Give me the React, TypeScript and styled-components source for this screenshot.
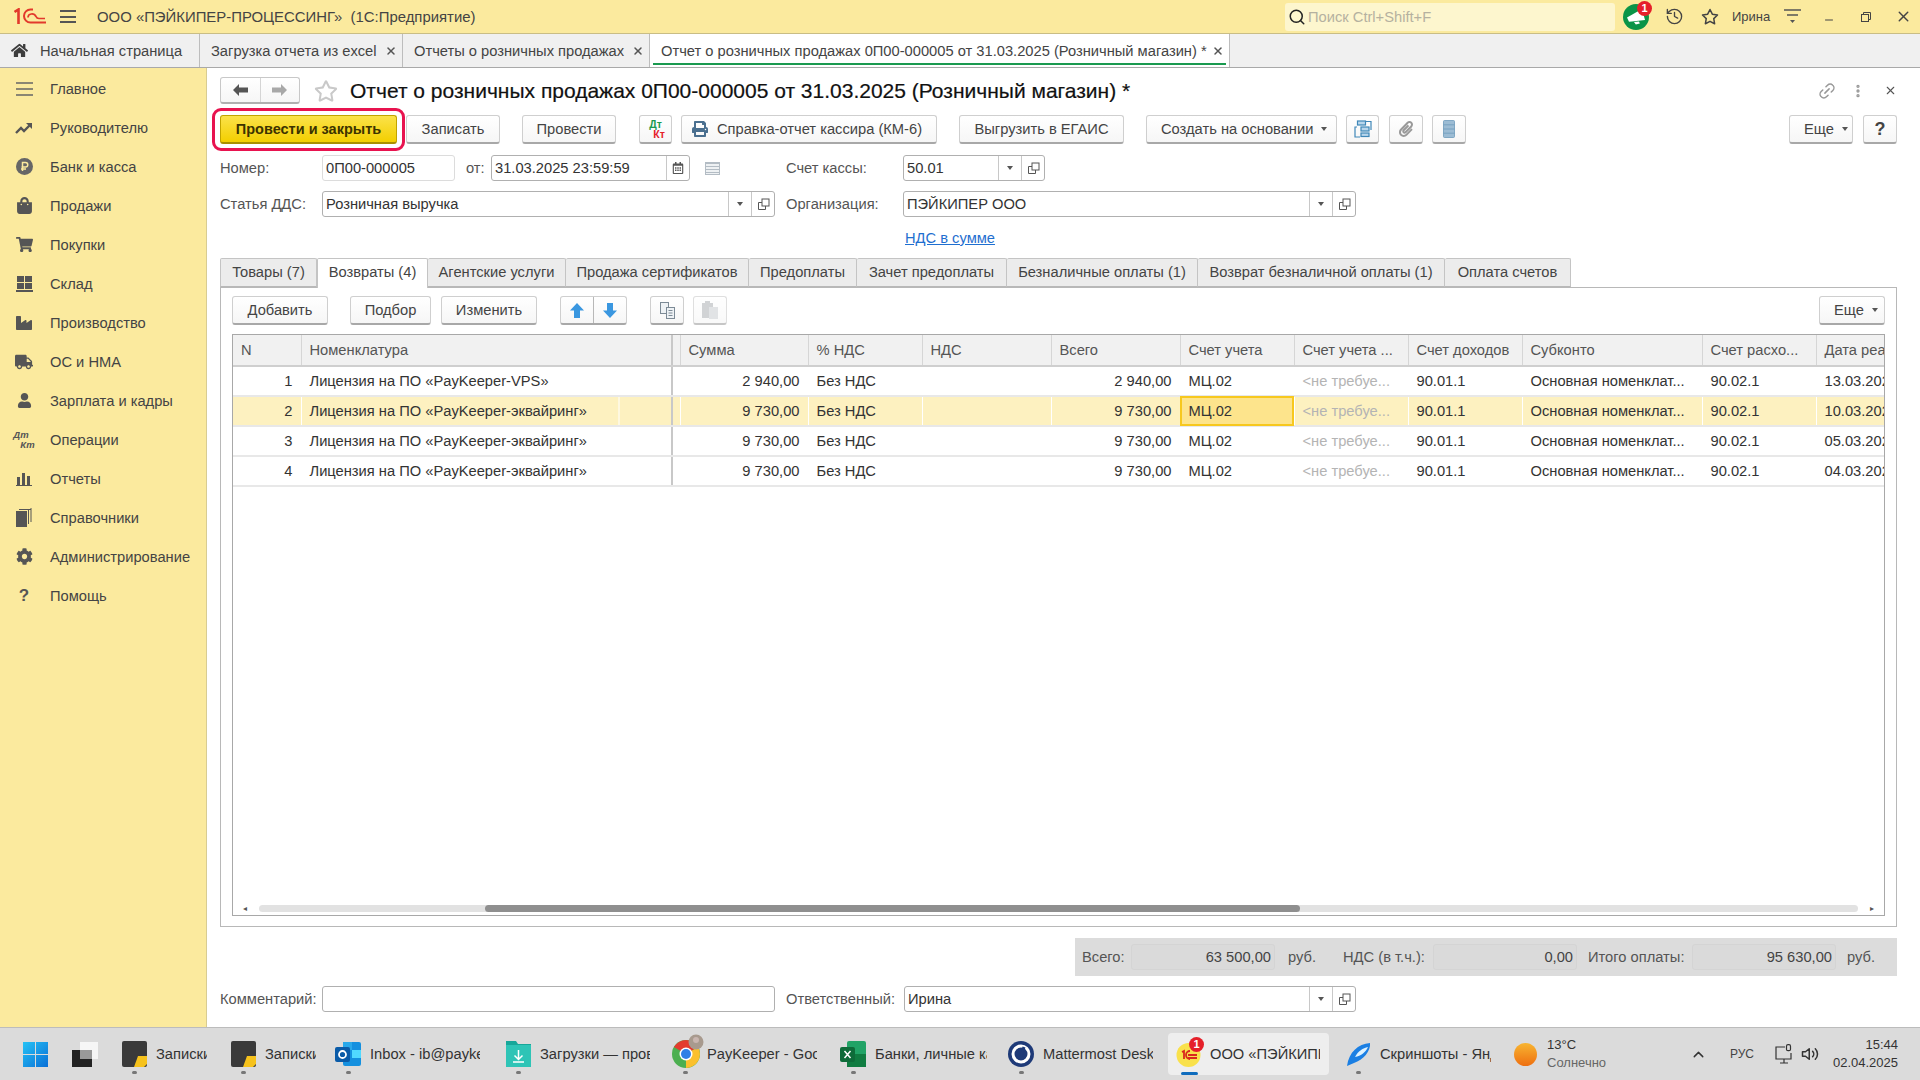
import React from "react";
import styled, { createGlobalStyle } from "styled-components";
import {
  FaCog,
  FaHome,
  FaIndustry,
  FaPrint,
  FaRegCalendarAlt,
  FaRegStar,
  FaShoppingBag,
  FaShoppingCart,
  FaTruck,
  FaUser,
  FaPaperclip,
} from "react-icons/fa";
import { FiLink2, FiMoreVertical, FiX, FiSearch, FiStar, FiChevronUp, FiVolume2, FiMinus } from "react-icons/fi";
import { History } from "lucide-react";

const GlobalStyle = createGlobalStyle`
  html, body { margin: 0; padding: 0; height: 100%; }
  body { font-family: "Liberation Sans", Arial, sans-serif; font-size: 14.7px; color: #333; overflow: hidden; }
  button { font-family: inherit; }
`;

const Page = styled.div`
  width: 1920px;
  height: 1080px;
  display: flex;
  flex-direction: column;
  background: #fff;
`;

/* top bar */
const TopBar = styled.div`
  height: 33px;
  flex: none;
  background: #fbea9e;
  border-bottom: 1px solid #c9bd85;
  display: flex;
  align-items: center;
`;

const Logo = styled.div`
  width: 32px;
  height: 17px;
  margin-left: 14px;
  flex: none;
`;

const Burger = styled.div`
  width: 16px;
  height: 13px;
  margin-left: 14px;
  flex: none;
  border-top: 2px solid #555;
  border-bottom: 2px solid #555;
  position: relative;
  box-sizing: border-box;
  &::after {
    content: "";
    position: absolute;
    left: 0;
    right: 0;
    top: 3.5px;
    height: 2px;
    background: #555;
  }
`;

const AppTitle = styled.div`
  margin-left: 21px;
  font-size: 14.9px;
  color: #444;
  white-space: pre;
  flex: 1;
`;

const Search = styled.div`
  width: 330px;
  height: 28px;
  background: #fdf6ce;
  border-radius: 3px;
  display: flex;
  align-items: center;
  gap: 2px;
  padding-left: 3px;
  box-sizing: border-box;
  color: #b5b1a0;
  font-size: 14.7px;
  svg { color: #222; flex: none; }
`;

const TopIcons = styled.div`
  display: flex;
  align-items: center;
  height: 100%;
  color: #444;
`;

const NotifyCircle = styled.div`
  width: 26px;
  height: 26px;
  border-radius: 50%;
  background: #0a9447;
  margin-left: 8px;
  position: relative;
  display: flex;
  align-items: center;
  justify-content: center;
`;

const RedBadge = styled.div`
  position: absolute;
  top: -3px;
  right: -3px;
  width: 15px;
  height: 15px;
  border-radius: 50%;
  background: #e5202a;
  color: #fff;
  font-size: 11px;
  font-weight: 700;
  line-height: 15px;
  text-align: center;
`;

const TopIconSlot = styled.div<{ $w: number }>`
  width: ${(p) => p.$w}px;
  display: flex;
  justify-content: center;
  align-items: center;
  font-size: 13px;
`;

/* tabs of open windows */
const WindowTabs = styled.div`
  height: 34px;
  flex: none;
  background: #f0f0f0;
  border-bottom: 1px solid #a9a9a9;
  display: flex;
  box-sizing: border-box;
`;

const WindowTab = styled.div<{ $w: number; $active?: boolean }>`
  width: ${(p) => p.$w}px;
  flex: none;
  box-sizing: border-box;
  border-right: 1px solid #bdbdbd;
  background: ${(p) => (p.$active ? "#fff" : "transparent")};
  display: flex;
  align-items: center;
  padding: 0 5px 0 11px;
  position: relative;
  white-space: nowrap;
  color: #444;
  ${(p) =>
    p.$active
      ? `&::after { content: ""; position: absolute; left: 3px; right: 3px; bottom: 2px; height: 2px; background: #1a9a50; }`
      : ""}
`;

const TabClose = styled.span`
  margin-left: auto;
  color: #555;
  display: flex;
`;

const HomeGlyph = styled.span`
  color: #3d3d3d;
  margin-right: 12px;
  display: flex;
`;

const Middle = styled.div`
  flex: 1;
  display: flex;
  min-height: 0;
`;

/* left section panel */
const Sidebar = styled.div`
  width: 207px;
  flex: none;
  box-sizing: border-box;
  background: #fbea9e;
  border-right: 1px solid #d8cc92;
  padding-top: 1px;
`;

const SideRow = styled.div`
  height: 39px;
  display: flex;
  align-items: center;
  color: #444;
`;

const SideIcon = styled.div`
  width: 50px;
  flex: none;
  display: flex;
  align-items: center;
  justify-content: center;
  color: #555;
  padding-right: 2px;
  box-sizing: border-box;
`;

const DtKt = styled.span<{ $italic?: boolean }>`
  font-size: ${(p) => (p.$italic ? 9.5 : 10.5)}px;
  font-weight: 700;
  line-height: 10px;
  display: inline-flex;
  flex-direction: column;
  font-style: ${(p) => (p.$italic ? "italic" : "normal")};
  & > b:last-child { margin-left: 7px; }
`;

const Main = styled.div`
  flex: 1;
  min-width: 0;
  display: flex;
  flex-direction: column;
  padding: 9px 23px 15px 13px;
  box-sizing: border-box;
`;

const TitleRow = styled.div`
  height: 27px;
  flex: none;
  display: flex;
  align-items: center;
`;

const NavGroup = styled.div`
  width: 80px;
  height: 27px;
  box-sizing: border-box;
  background: linear-gradient(#fff, #f6f6f6);
  border: 1px solid #c8c8c8;
  border-bottom: 2px solid #b0b0b0;
  border-radius: 3px;
  display: flex;
`;

const NavCell = styled.div`
  flex: 1;
  display: flex;
  align-items: center;
  justify-content: center;
  & + & { border-left: 1px solid #d5d5d5; }
`;

const FavStar = styled.div`
  margin-left: 13px;
  width: 25px;
  display: flex;
  justify-content: center;
  color: #c9c9c9;
`;

const FormTitle = styled.h1`
  margin: 0 0 0 12px;
  font-size: 21px;
  font-weight: 400;
  color: #111;
  white-space: nowrap;
  flex: 1;
  -webkit-text-stroke: 0.2px #111;
`;

const TitleTools = styled.div`
  display: flex;
  align-items: center;
  gap: 18px;
  color: #999;
`;

const LinkGlyph = styled(FiLink2)`
  transform: rotate(-45deg);
  margin-right: -4px;
`;

const Toolbar = styled.div<{ $top: number }>`
  flex: none;
  display: flex;
  margin-top: ${(p) => p.$top}px;
  align-items: stretch;
`;

const Btn = styled.button<{
  $w: number;
  $ml?: number;
  $auto?: boolean;
  $faded?: boolean;
  $help?: boolean;
  $menu?: boolean;
  $iconFirst?: boolean;
}>`
  width: ${(p) => p.$w}px;
  height: 29px;
  flex: none;
  margin-left: ${(p) => (p.$auto ? "auto" : `${p.$ml ?? 0}px`)};
  padding: 0 ${(p) => (p.$iconFirst ? 4 : 0)}px 0 ${(p) => (p.$menu ? 14 : 0)}px;
  box-sizing: border-box;
  background: linear-gradient(#fff, #f6f6f6);
  border: 1px solid #cfcfcf;
  border-bottom: 2px solid #a8a8a8;
  border-radius: 3px;
  font-size: ${(p) => (p.$help ? 18 : 14.7)}px;
  font-weight: ${(p) => (p.$help ? 700 : 400)};
  color: #444;
  display: flex;
  align-items: center;
  justify-content: ${(p) => (p.$menu ? "flex-start" : "center")};
  gap: ${(p) => (p.$menu ? 8 : 9)}px;
  white-space: nowrap;
  opacity: ${(p) => (p.$faded ? 0.65 : 1)};
`;

const PrimaryWrap = styled.div`
  position: relative;
  flex: none;
  &::after {
    content: "";
    position: absolute;
    inset: -7px -8px -7px -8px;
    border: 3px solid #e8134f;
    border-radius: 9px;
    pointer-events: none;
  }
`;

const PrimaryBtn = styled.button`
  width: 177px;
  height: 29px;
  padding: 0;
  box-sizing: border-box;
  background: linear-gradient(#fbe24a, #f3cf00);
  border: 1px solid #c2a400;
  border-bottom: 2px solid #a88f00;
  border-radius: 3px;
  font-size: 14.5px;
  font-weight: 700;
  color: #3c3300;
  display: block;
`;

const Caret = styled.span`
  width: 0;
  height: 0;
  border-left: 3px solid transparent;
  border-right: 3px solid transparent;
  border-top: 4px solid #555;
  flex: none;
`;

const FormRow = styled.div<{ $top: number }>`
  flex: none;
  display: flex;
  align-items: center;
  height: 26px;
  margin-top: ${(p) => p.$top}px;
`;

const Label = styled.label<{ $w: number; $ml?: number }>`
  width: ${(p) => p.$w}px;
  margin-left: ${(p) => p.$ml ?? 0}px;
  flex: none;
  color: #555;
  white-space: nowrap;
`;

const Field = styled.div<{ $w: number; $soft?: boolean }>`
  width: ${(p) => p.$w}px;
  height: 26px;
  flex: none;
  box-sizing: border-box;
  border: 1px solid ${(p) => (p.$soft ? "#dcdcdc" : "#b0b0b0")};
  border-radius: 3px;
  background: #fff;
  display: flex;
  align-items: center;
  color: #333;
`;

const FieldText = styled.span`
  flex: 1;
  padding-left: 3px;
  white-space: nowrap;
  overflow: hidden;
`;

const FieldBtn = styled.span`
  width: 23px;
  height: 100%;
  flex: none;
  box-sizing: border-box;
  border-left: 1px solid #c8c8c8;
  display: flex;
  align-items: center;
  justify-content: center;
  color: #555;
`;

const ListGlyph = styled.span`
  margin-left: 15px;
  width: 15px;
  height: 13px;
  box-sizing: border-box;
  border: 1px solid #b3bcc4;
  background: repeating-linear-gradient(#b3bcc4 0 1px, #eef1f3 1px 3px);
  flex: none;
`;

const LinkRow = styled.div`
  flex: none;
  height: 20px;
  margin-top: 11px;
  padding-left: 685px;
  line-height: 20px;
`;

const LinkText = styled.a`
  color: #1f6fd0;
  text-decoration: underline;
`;

const Tabs = styled.div`
  flex: none;
  height: 29px;
  margin-top: 10px;
  display: flex;
  position: relative;
  z-index: 1;
`;

const Tab = styled.div<{ $w: number; $active?: boolean }>`
  width: ${(p) => p.$w}px;
  height: ${(p) => (p.$active ? 30 : 29)}px;
  flex: none;
  box-sizing: border-box;
  background: ${(p) => (p.$active ? "#fff" : "#ececec")};
  border: 1px solid #c4c4c4;
  border-left-width: ${(p) => (p.$active ? 1 : 0)}px;
  border-bottom: ${(p) => (p.$active ? "none" : "1px solid #b8b8b8")};
  border-radius: 2px 2px 0 0;
  padding-bottom: ${(p) => (p.$active ? 3 : 2)}px;
  color: #444;
  display: flex;
  align-items: center;
  justify-content: center;
  white-space: nowrap;
  &:first-child { border-left-width: 1px; }
`;

const TabPanel = styled.div`
  flex: 1;
  min-height: 0;
  display: flex;
  flex-direction: column;
  box-sizing: border-box;
  border: 1px solid #b8b8b8;
  padding: 8px 11px 10px;
`;

const GroupBtn = styled.div`
  width: 67px;
  height: 29px;
  margin-left: 23px;
  flex: none;
  box-sizing: border-box;
  background: linear-gradient(#fff, #f6f6f6);
  border: 1px solid #cfcfcf;
  border-bottom: 2px solid #a8a8a8;
  border-radius: 3px;
  display: flex;
`;

const GroupCell = styled.div`
  flex: 1;
  display: flex;
  align-items: center;
  justify-content: center;
  & + & { border-left: 1px solid #b8b8b8; }
`;

const GridBox = styled.div`
  flex: 1;
  min-height: 0;
  margin-top: 9px;
  box-sizing: border-box;
  border: 1px solid #a8a8a8;
  display: flex;
  flex-direction: column;
  overflow: hidden;
`;

const Table = styled.table`
  width: 1652px;
  table-layout: fixed;
  border-collapse: collapse;
  flex: none;
`;

const Th = styled.th<{ $w: number; $sep?: boolean }>`
  width: ${(p) => p.$w}px;
  height: 31px;
  padding: 0 0 0 ${(p) => (p.$w > 8 ? 8 : 0)}px;
  box-sizing: border-box;
  background: #f1f1f1;
  border-right: ${(p) => (p.$sep ? "2px solid #c8c8c8" : "1px solid #d6d6d6")};
  border-bottom: 2px solid #cfcfcf;
  font-weight: 400;
  font-size: 14.7px;
  color: #555;
  text-align: left;
  white-space: nowrap;
  overflow: hidden;
`;

const Row = styled.tr<{ $selected?: boolean }>`
  background: ${(p) => (p.$selected ? "#fdf1c0" : "#fff")};
`;

const Td = styled.td<{
  $right?: boolean;
  $muted?: boolean;
  $current?: boolean;
  $sep?: boolean;
  $selected?: boolean;
  $split?: boolean;
}>`
  height: 30px;
  padding: 0 ${(p) => (p.$right ? 8 : 0)}px 0 ${(p) => (p.$right ? 0 : 8)}px;
  box-sizing: border-box;
  border-bottom: 2px solid #e8e8e8;
  border-right: ${(p) =>
    p.$sep ? "2px solid #c8c8c8" : `1.5px solid ${p.$selected ? "#fff" : "transparent"}`};
  font-size: 14.7px;
  color: ${(p) => (p.$muted ? "#b4b4b4" : "#333")};
  text-align: ${(p) => (p.$right ? "right" : "left")};
  white-space: nowrap;
  overflow: hidden;
  background: ${(p) =>
    p.$current
      ? "#fde48c"
      : p.$split
        ? "linear-gradient(90deg, transparent 317px, #fff 317px 318.5px, transparent 318.5px)"
        : "transparent"};
  outline: ${(p) => (p.$current ? "2px solid #f7c81e" : "none")};
  outline-offset: -2px;
`;

const GridFill = styled.div`
  flex: 1;
`;

const Scrollbar = styled.div`
  height: 13px;
  flex: none;
  display: flex;
  align-items: center;
  padding: 0 10px;
  gap: 9px;
  color: #555;
  font-size: 8px;
`;

const ScrollTrack = styled.div`
  flex: 1;
  height: 7px;
  background: #e2e2e2;
  border-radius: 4px;
  padding-left: 226px;
  margin: 0 3px;
`;

const ScrollThumb = styled.div`
  width: 815px;
  height: 7px;
  background: #8f8f8f;
  border-radius: 4px;
`;

const Totals = styled.div`
  flex: none;
  height: 38px;
  margin-top: 11px;
  margin-left: 855px;
  background: #dcdcdc;
  display: flex;
  align-items: center;
  padding-left: 7px;
  color: #555;
`;

const TotalField = styled.div`
  width: 144px;
  height: 26px;
  flex: none;
  box-sizing: border-box;
  background: #dadada;
  border: 1px solid #d4d4d4;
  border-radius: 3px;
  text-align: right;
  padding-right: 3px;
  line-height: 24px;
  color: #444;
`;

const TotalLabel = styled.span<{ $w: number; $ml?: number }>`
  width: ${(p) => p.$w}px;
  margin-left: ${(p) => p.$ml ?? 0}px;
  white-space: nowrap;
  flex: none;
`;

/* windows taskbar */
const Taskbar = styled.div`
  height: 53px;
  flex: none;
  box-sizing: border-box;
  background: #dbdbdb;
  border-top: 1px solid #bcbcbc;
  display: flex;
  align-items: center;
  padding-left: 23px;
`;

const TaskItem = styled.div<{ $w: number; $active?: boolean; $bare?: boolean; $ml?: number }>`
  width: ${(p) => p.$w}px;
  height: 42px;
  flex: none;
  box-sizing: border-box;
  display: flex;
  align-items: center;
  gap: 9px;
  padding-left: ${(p) => (p.$bare ? 0 : 7)}px;
  margin-left: ${(p) => p.$ml ?? 0}px;
  position: relative;
  border-radius: 4px;
  background: ${(p) => (p.$active ? "#eeeeee" : "transparent")};
  color: #333;
  white-space: nowrap;
  ${(p) =>
    p.$bare
      ? ""
      : `&::after {
    content: "";
    position: absolute;
    bottom: ${p.$active ? 0 : 1}px;
    left: ${p.$active ? 13 : 18}px;
    width: ${p.$active ? 17 : 5}px;
    height: 3px;
    border-radius: 2px;
    background: ${p.$active ? "#0f6cbd" : "#777"};
  }`}
`;

const TaskText = styled.span<{ $w: number }>`
  width: ${(p) => p.$w}px;
  overflow: hidden;
  flex: none;
`;

const TaskIconBox = styled.div`
  width: 26px;
  height: 26px;
  flex: none;
  position: relative;
  display: flex;
  align-items: center;
  justify-content: center;
`;

const TaskBadge = styled(RedBadge)`
  top: -4px;
  right: -3px;
`;

const Tray = styled.div`
  display: flex;
  align-items: center;
  margin-left: 6px;
  flex: 1;
  color: #333;
  padding-right: 22px;
`;

const WeatherDot = styled.div`
  width: 23px;
  height: 23px;
  border-radius: 50%;
  background: linear-gradient(#f8b531, #ee6f10);
  flex: none;
`;

const WeatherText = styled.div`
  margin-left: 10px;
  width: 143px;
  flex: none;
  font-size: 13px;
  line-height: 18px;
  color: #666;
  & > div:first-child { color: #333; }
`;

const TrayLang = styled.span`
  margin-left: 23px;
  font-size: 12px;
  color: #444;
`;

const TrayGlyph = styled.span<{ $ml: number }>`
  margin-left: ${(p) => p.$ml}px;
  display: flex;
`;

const Clock = styled.div`
  margin-left: auto;
  text-align: right;
  font-size: 13px;
  line-height: 18px;
  color: #333;
`;

const tabs: [string, number][] = [
  ["Товары (7)", 97],
  ["Возвраты (4)", 111],
  ["Агентские услуги", 138],
  ["Продажа сертификатов", 183],
  ["Предоплаты", 108],
  ["Зачет предоплаты", 150],
  ["Безналичные оплаты (1)", 191],
  ["Возврат безналичной оплаты (1)", 247],
  ["Оплата счетов", 126],
];

const columns: [string, number][] = [
  ["N", 68],
  ["Номенклатура", 371],
  ["", 8],
  ["Сумма", 128],
  ["% НДС", 114],
  ["НДС", 129],
  ["Всего", 129],
  ["Счет учета", 114],
  ["Счет учета ...", 114],
  ["Счет доходов", 114],
  ["Субконто", 180],
  ["Счет расхо...", 114],
  ["Дата реализации", 69],
];

const rows = [
  { n: 1, name: "Лицензия на ПО «PayKeeper-VPS»", sum: "2 940,00", date: "13.03.2025" },
  { n: 2, name: "Лицензия на ПО «PayKeeper-эквайринг»", sum: "9 730,00", date: "10.03.2025" },
  { n: 3, name: "Лицензия на ПО «PayKeeper-эквайринг»", sum: "9 730,00", date: "05.03.2025" },
  { n: 4, name: "Лицензия на ПО «PayKeeper-эквайринг»", sum: "9 730,00", date: "04.03.2025" },
];

const OpenIcon = () => (
  <svg width="13" height="13" viewBox="0 0 13 13" fill="none" stroke="#555" strokeWidth="1">
    <rect x="5" y="1" width="7" height="7" />
    <path d="M5 4.5H1.500V11.500H8.500V8" />
  </svg>
);

const NavArrow = ({ tone, flip }: { tone: string; flip?: boolean }) => (
  <svg width="15" height="12" viewBox="0 0 15 12" fill={tone} style={flip ? { transform: "scaleX(-1)" } : undefined}>
    <path d="M0 6l6-6v3.500h9v5H6V12z" />
  </svg>
);

const BlueArrow = ({ down }: { down?: boolean }) => (
  <svg width="14" height="15" viewBox="0 0 14 15" fill="#3a97e0" style={down ? { transform: "scaleY(-1)" } : undefined}>
    <path d="M7 0l7 7.500H10V15H4V7.500H0z" />
  </svg>
);

const Lines = () => (
  <svg width="17" height="16" viewBox="0 0 17 16" stroke="#666" strokeWidth="1.5">
    <path d="M0 2h17M0 8h17M0 14h17" />
  </svg>
);

const Trend = () => (
  <svg width="18" height="12" viewBox="0 0 18 12" fill="none" stroke="#555" strokeWidth="2.4">
    <path d="M1 11l5-5 3 3 6-6" />
    <path d="M11 1h6v6" fill="#555" stroke="none" />
  </svg>
);

const Coin = () => (
  <svg width="17" height="17" viewBox="0 0 17 17">
    <circle cx="8.500" cy="8.500" r="8.500" fill="#666" />
    <path d="M6.500 13V4.500h3a2 2 0 010 4.500h-4M5 11h5" fill="none" stroke="#fbea9e" strokeWidth="1.500" />
  </svg>
);

const Warehouse = () => (
  <svg width="17" height="16" viewBox="0 0 17 16" fill="#555">
    <rect x="1" y="0" width="7" height="6" />
    <rect x="9" y="0" width="7" height="6" />
    <rect x="1" y="7" width="7" height="6" />
    <rect x="9" y="7" width="7" height="6" />
    <rect x="0" y="14" width="17" height="2" />
  </svg>
);

const Bars = () => (
  <svg width="16" height="14" viewBox="0 0 16 14" fill="#555">
    <rect x="1" y="5" width="3" height="8" />
    <rect x="6" y="1" width="3" height="12" />
    <rect x="11" y="4" width="3" height="9" />
    <rect x="0" y="13" width="16" height="1" />
  </svg>
);

const Books = () => (
  <svg width="16" height="19" viewBox="0 0 16 19" fill="#555">
    <rect x="0" y="3" width="11" height="16" />
    <path d="M12 2h1v14h-1zM14.500 0h1v14h-1zM3 1h12v1H3z" />
  </svg>
);

const Question = styled.b`
  font-size: 17px;
`;

const sideItems: [string, React.ReactNode][] = [
  ["Главное", <Lines />],
  ["Руководителю", <Trend />],
  ["Банк и касса", <Coin />],
  ["Продажи", <FaShoppingBag size={17} />],
  ["Покупки", <FaShoppingCart size={17} />],
  ["Склад", <Warehouse />],
  ["Производство", <FaIndustry size={16} />],
  ["ОС и НМА", <FaTruck size={18} />],
  ["Зарплата и кадры", <FaUser size={15} />],
  [
    "Операции",
    <DtKt $italic>
      <b>Дт</b>
      <b>Кт</b>
    </DtKt>,
  ],
  ["Отчеты", <Bars />],
  ["Справочники", <Books />],
  ["Администрирование", <FaCog size={17} />],
  ["Помощь", <Question>?</Question>],
];

// 1C mark: the figure and the letter run into the long lines on the right
const OneCLogo = () => (
  <svg width="32" height="17" viewBox="0 0 32 17" fill="none" stroke="#e2392c">
    <path d="M0.500 4L4.500 1.500V16" strokeWidth="2.600" />
    <path d="M19 1.500H16.500a6.500 6.500 0 000 13H32" strokeWidth="2" />
    <path d="M14 9.500c0-4 6-5 8-1 .6 1.500 1.500 2 3 2h6" strokeWidth="1.700" />
  </svg>
);

const Megaphone = () => (
  <svg width="18" height="16" viewBox="0 0 18 16" fill="#fff">
    <path d="M0 8.500L15 0l3 11-13 1.500-3 .2z" />
    <path d="M7 13l5-.5.8 2-4 1z" />
  </svg>
);

const FilterIcon = () => (
  <svg width="17" height="15" viewBox="0 0 17 15" stroke="#555" strokeWidth="1.500" fill="#555">
    <path d="M0 1h17M3 6h11" />
    <path d="M6 11h5l-2.500 3z" strokeWidth="0" />
  </svg>
);

const RestoreIcon = () => (
  <svg width="10" height="10" viewBox="0 0 10 10" fill="none" stroke="#444" strokeWidth="1">
    <rect x="0.500" y="2.500" width="7" height="7" />
    <path d="M2.500 2.500V0.500H9.500V7.500H7.500" />
  </svg>
);

const CopyIcon = ({ tone }: { tone: string }) => (
  <svg width="17" height="17" viewBox="0 0 17 17" fill="#eef2f5" stroke={tone}>
    <rect x="1.500" y="0.500" width="8" height="11" />
    <rect x="7.500" y="5.500" width="8" height="11" />
    <path d="M9.500 8.500h4M9.500 11h4M9.500 13.500h4" />
  </svg>
);

const PasteIcon = () => (
  <svg width="16" height="18" viewBox="0 0 16 18" fill="#b9bcbf">
    <rect x="0" y="2" width="11" height="15" />
    <rect x="3" y="0" width="5" height="3" />
    <rect x="7" y="6" width="9" height="12" fill="#d2d5d8" />
  </svg>
);

const StructIcon = () => (
  <svg width="18" height="18" viewBox="0 0 18 18" fill="#b9d6ec" stroke="#3f87b8" strokeWidth="1.200">
    <rect x="3.500" y="1" width="8" height="4" />
    <rect x="7" y="7" width="8" height="4" />
    <rect x="7" y="13" width="8" height="3.500" />
    <path d="M3 7H1v10h5M12 1.500h5V10" fill="none" />
  </svg>
);

const ListBlue = () => (
  <svg width="12" height="18" viewBox="0 0 12 18" fill="#9cbcd4" stroke="#6d9abb" strokeWidth="0.800">
    <rect x="0.500" y="0.500" width="11" height="17" rx="1" />
    <path d="M0.500 4.800h11M0.500 9h11M0.500 13.200h11" />
  </svg>
);

const WinLogo = () => (
  <svg width="25" height="25" viewBox="0 0 25 25">
    <defs>
      <linearGradient id="win" x1="0" y1="0" x2="1" y2="1">
        <stop offset="0" stopColor="#25c2f5" />
        <stop offset="1" stopColor="#0a6fd6" />
      </linearGradient>
    </defs>
    <path d="M0 0h12v12H0zM13 0h12v12H13zM0 13h12v12H0zM13 13h12v12H13z" fill="url(#win)" />
  </svg>
);

const TaskView = () => (
  <svg width="26" height="25" viewBox="0 0 26 25">
    <rect x="0" y="8" width="20" height="17" fill="#222" />
    <rect x="8" y="0" width="18" height="17" fill="#f6f6f6" />
    <rect x="8" y="8" width="12" height="9" fill="#999" />
  </svg>
);

const NotesIcon = () => (
  <svg width="25" height="26" viewBox="0 0 25 26">
    <rect x="0" y="0" width="25" height="26" rx="2" fill="#3a3a3a" />
    <path d="M12 26l4-11h9v8l-3 3z" fill="#f6c21c" />
  </svg>
);

const OutlookIcon = () => (
  <svg width="26" height="26" viewBox="0 0 26 26">
    <rect x="8" y="1" width="18" height="24" rx="2" fill="#1490df" />
    <rect x="8" y="1" width="9" height="8" fill="#28a8ea" />
    <rect x="17" y="9" width="9" height="8" fill="#50d9ff" />
    <rect x="0" y="6" width="15" height="15" rx="2" fill="#0a5ba8" />
    <circle cx="7.500" cy="13.500" r="3.500" fill="none" stroke="#fff" strokeWidth="1.800" />
  </svg>
);

const DownloadsIcon = () => (
  <svg width="25" height="26" viewBox="0 0 25 26">
    <path d="M0 0h10l2 3h13v23H0z" fill="#17a79a" />
    <path d="M0 4h25v22H0z" fill="#2ec4b6" />
    <path d="M12.500 9v9M8.500 14.500l4 4 4-4M7 21h11" stroke="#fff" strokeWidth="1.500" fill="none" />
  </svg>
);

const ChromeGlyph = styled.svg`
  margin-top: -6px;
  margin-left: 2px;
  margin-right: -3px;
  flex: none;
`;

const ChromeIcon = () => (
  <ChromeGlyph width="32" height="36" viewBox="0 0 32 36">
    <circle cx="14" cy="21" r="14" fill="#4caf50" />
    <path d="M14 21L1.900 14A14 14 0 0126.100 14z" fill="#e33b2e" />
    <path d="M14 21l12.100-7A14 14 0 0114 35z" fill="#fbc02d" />
    <circle cx="14" cy="21" r="6.500" fill="#fff" />
    <circle cx="14" cy="21" r="5" fill="#2f7fe6" />
    <circle cx="24" cy="9" r="7.500" fill="#a89a8e" />
    <circle cx="24" cy="7" r="3" fill="#c9b6b0" />
  </ChromeGlyph>
);

const ExcelIcon = () => (
  <svg width="26" height="26" viewBox="0 0 26 26">
    <rect x="7" y="0" width="19" height="26" rx="2" fill="#21a366" />
    <rect x="7" y="13" width="19" height="13" fill="#107c41" />
    <rect x="0" y="6" width="15" height="15" rx="2" fill="#0e6b39" />
    <path d="M4.500 10l6 7M10.500 10l-6 7" stroke="#fff" strokeWidth="1.500" />
  </svg>
);

const MattermostIcon = () => (
  <svg width="26" height="26" viewBox="0 0 26 26" fill="none">
    <circle cx="13" cy="13" r="13" fill="#1e3a78" />
    <circle cx="13" cy="13" r="8" stroke="#fff" strokeWidth="3" />
    <path d="M13 15l3-9" stroke="#1e3a78" strokeWidth="3" />
  </svg>
);

const OneCTask = () => (
  <svg width="25" height="25" viewBox="0 0 25 25" fill="none">
    <circle cx="12.500" cy="13" r="12" fill="#f9e14b" />
    <path d="M6 10l2-1v8M14 9a4 4 0 000 8M12 13h9M12 16h9" stroke="#d9281e" strokeWidth="1.800" />
  </svg>
);

const YandexIcon = () => (
  <svg width="25" height="25" viewBox="0 0 25 25">
    <path d="M1 24C3 10 12 2 24 1c1 8-7 17-16 20z" fill="#1b7fe3" />
    <path d="M9 15C12 9 17 6 22 5c-2 5-7 9-13 10z" fill="#dff3ff" />
  </svg>
);

const MonitorIcon = () => (
  <svg width="18" height="20" viewBox="0 0 18 20" fill="none" stroke="#333" strokeWidth="1.200">
    <path d="M10 3H1v12h15V9M5 19h8M9 15v4" />
    <rect x="11.500" y="0.700" width="4" height="6" rx="1.500" />
  </svg>
);

const CloseGlyph = () => (
  <TabClose>
    <FiX size={12} strokeWidth={3} />
  </TabClose>
);

const FieldOpeners = () => (
  <>
    <FieldBtn>
      <Caret />
    </FieldBtn>
    <FieldBtn>
      <OpenIcon />
    </FieldBtn>
  </>
);

export default function App() {
  return (
    <Page>
      <GlobalStyle />
      <TopBar>
        <Logo>
          <OneCLogo />
        </Logo>
        <Burger />
        <AppTitle>ООО «ПЭЙКИПЕР-ПРОЦЕССИНГ»  (1С:Предприятие)</AppTitle>
        <Search>
          <FiSearch size={18} />
          Поиск Ctrl+Shift+F
        </Search>
        <TopIcons>
          <NotifyCircle>
            <Megaphone />
            <RedBadge>1</RedBadge>
          </NotifyCircle>
          <TopIconSlot $w={9} />
          <TopIconSlot $w={32}>
            <History size={19} strokeWidth={1.7} />
          </TopIconSlot>
          <TopIconSlot $w={40}>
            <FiStar size={18} />
          </TopIconSlot>
          <TopIconSlot $w={42}>Ирина</TopIconSlot>
          <TopIconSlot $w={40}>
            <FilterIcon />
          </TopIconSlot>
          <TopIconSlot $w={34}>
            <FiMinus size={12} style={{ marginTop: 7 }} />
          </TopIconSlot>
          <TopIconSlot $w={40}>
            <RestoreIcon />
          </TopIconSlot>
          <TopIconSlot $w={34}>
            <FiX size={17} />
          </TopIconSlot>
        </TopIcons>
      </TopBar>

      <WindowTabs>
        <WindowTab $w={200}>
          <HomeGlyph>
            <FaHome size={17} />
          </HomeGlyph>
          Начальная страница
        </WindowTab>
        <WindowTab $w={203}>
          Загрузка отчета из excel
          <CloseGlyph />
        </WindowTab>
        <WindowTab $w={247}>
          Отчеты о розничных продажах
          <CloseGlyph />
        </WindowTab>
        <WindowTab $w={580} $active>
          Отчет о розничных продажах 0П00-000005 от 31.03.2025 (Розничный магазин) *
          <CloseGlyph />
        </WindowTab>
      </WindowTabs>

      <Middle>
        <Sidebar>
          {sideItems.map(([label, icon]) => (
            <SideRow key={label}>
              <SideIcon>{icon}</SideIcon>
              {label}
            </SideRow>
          ))}
        </Sidebar>

        <Main>
          <TitleRow>
            <NavGroup>
              <NavCell>
                <NavArrow tone="#555" />
              </NavCell>
              <NavCell>
                <NavArrow tone="#a8a8a8" flip />
              </NavCell>
            </NavGroup>
            <FavStar>
              <FaRegStar size={24} />
            </FavStar>
            <FormTitle>Отчет о розничных продажах 0П00-000005 от 31.03.2025 (Розничный магазин) *</FormTitle>
            <TitleTools>
              <LinkGlyph size={18} />
              <FiMoreVertical size={16} strokeWidth={3} />
              <FiX size={13} color="#555" />
            </TitleTools>
          </TitleRow>

          <Toolbar $top={11}>
            <PrimaryWrap>
              <PrimaryBtn>Провести и закрыть</PrimaryBtn>
            </PrimaryWrap>
            <Btn $w={94} $ml={9}>
              Записать
            </Btn>
            <Btn $w={94} $ml={22}>
              Провести
            </Btn>
            <Btn $w={33} $ml={23}>
              <DtKt>
                <b style={{ color: "#1a9a50" }}>Дт</b>
                <b style={{ color: "#e5202a" }}>Кт</b>
              </DtKt>
            </Btn>
            <Btn $w={256} $ml={9} $iconFirst>
              <FaPrint size={16} color="#4a6f8f" />
              Справка-отчет кассира (КМ-6)
            </Btn>
            <Btn $w={165} $ml={22}>
              Выгрузить в ЕГАИС
            </Btn>
            <Btn $w={191} $ml={22} $menu>
              Создать на основании
              <Caret />
            </Btn>
            <Btn $w={33} $ml={9}>
              <StructIcon />
            </Btn>
            <Btn $w={34} $ml={10}>
              <FaPaperclip size={16} color="#999" />
            </Btn>
            <Btn $w={34} $ml={9}>
              <ListBlue />
            </Btn>
            <Btn $w={64} $auto $menu>
              Еще
              <Caret />
            </Btn>
            <Btn $w={34} $ml={10} $help>
              ?
            </Btn>
          </Toolbar>

          <FormRow $top={11}>
            <Label $w={102}>Номер:</Label>
            <Field $w={133} $soft>
              <FieldText>0П00-000005</FieldText>
            </Field>
            <Label $w={25} $ml={11}>
              от:
            </Label>
            <Field $w={199}>
              <FieldText>31.03.2025 23:59:59</FieldText>
              <FieldBtn>
                <FaRegCalendarAlt size={12} />
              </FieldBtn>
            </Field>
            <ListGlyph />
            <Label $w={117} $ml={66}>
              Счет кассы:
            </Label>
            <Field $w={142}>
              <FieldText>50.01</FieldText>
              <FieldOpeners />
            </Field>
          </FormRow>

          <FormRow $top={10}>
            <Label $w={102}>Статья ДДС:</Label>
            <Field $w={453}>
              <FieldText>Розничная выручка</FieldText>
              <FieldOpeners />
            </Field>
            <Label $w={117} $ml={11}>
              Организация:
            </Label>
            <Field $w={453}>
              <FieldText>ПЭЙКИПЕР ООО</FieldText>
              <FieldOpeners />
            </Field>
          </FormRow>

          <LinkRow>
            <LinkText>НДС в сумме</LinkText>
          </LinkRow>

          <Tabs>
            {tabs.map(([label, w], i) => (
              <Tab key={label} $w={w} $active={i === 1}>
                {label}
              </Tab>
            ))}
          </Tabs>

          <TabPanel>
            <Toolbar $top={0}>
              <Btn $w={96}>Добавить</Btn>
              <Btn $w={81} $ml={22}>
                Подбор
              </Btn>
              <Btn $w={96} $ml={10}>
                Изменить
              </Btn>
              <GroupBtn>
                <GroupCell>
                  <BlueArrow />
                </GroupCell>
                <GroupCell>
                  <BlueArrow down />
                </GroupCell>
              </GroupBtn>
              <Btn $w={34} $ml={23}>
                <CopyIcon tone="#7c8a96" />
              </Btn>
              <Btn $w={34} $ml={9} $faded>
                <PasteIcon />
              </Btn>
              <Btn $w={66} $auto $menu>
                Еще
                <Caret />
              </Btn>
            </Toolbar>

            <GridBox>
              <Table>
                <thead>
                  <tr>
                    {columns.map(([label, w], i) => (
                      <Th key={i} $w={w} $sep={i === 1}>
                        {label}
                      </Th>
                    ))}
                  </tr>
                </thead>
                <tbody>
                  {rows.map((r, i) => {
                    const sel = i === 1;
                    return (
                      <Row key={r.n} $selected={sel}>
                        <Td $right $selected={sel}>
                          {r.n}
                        </Td>
                        <Td $sep $split={sel}>
                          {r.name}
                        </Td>
                        <Td $selected={sel} />
                        <Td $right $selected={sel}>
                          {r.sum}
                        </Td>
                        <Td $selected={sel}>Без НДС</Td>
                        <Td $selected={sel} />
                        <Td $right $selected={sel}>
                          {r.sum}
                        </Td>
                        <Td $selected={sel} $current={sel}>
                          МЦ.02
                        </Td>
                        <Td $muted $selected={sel}>
                          &lt;не требуе...
                        </Td>
                        <Td $selected={sel}>90.01.1</Td>
                        <Td $selected={sel}>Основная номенклат...</Td>
                        <Td $selected={sel}>90.02.1</Td>
                        <Td>{r.date}</Td>
                      </Row>
                    );
                  })}
                </tbody>
              </Table>
              <GridFill />
              <Scrollbar>
                <span>◂</span>
                <ScrollTrack>
                  <ScrollThumb />
                </ScrollTrack>
                <span>▸</span>
              </Scrollbar>
            </GridBox>
          </TabPanel>

          <Totals>
            <TotalLabel $w={49}>Всего:</TotalLabel>
            <TotalField>63 500,00</TotalField>
            <TotalLabel $w={55} $ml={13}>
              руб.
            </TotalLabel>
            <TotalLabel $w={90}>НДС (в т.ч.):</TotalLabel>
            <TotalField>0,00</TotalField>
            <TotalLabel $w={104} $ml={11}>
              Итого оплаты:
            </TotalLabel>
            <TotalField>95 630,00</TotalField>
            <TotalLabel $w={40} $ml={11}>
              руб.
            </TotalLabel>
          </Totals>

          <FormRow $top={10}>
            <Label $w={102}>Комментарий:</Label>
            <Field $w={453} />
            <Label $w={118} $ml={11}>
              Ответственный:
            </Label>
            <Field $w={452}>
              <FieldText>Ирина</FieldText>
              <FieldOpeners />
            </Field>
          </FormRow>
        </Main>
      </Middle>

      <Taskbar>
        <TaskItem $w={49} $bare>
          <WinLogo />
        </TaskItem>
        <TaskItem $w={42} $bare>
          <TaskView />
        </TaskItem>
        <TaskItem $w={109}>
          <TaskIconBox>
            <NotesIcon />
          </TaskIconBox>
          <TaskText $w={51}>Записки</TaskText>
        </TaskItem>
        <TaskItem $w={105}>
          <TaskIconBox>
            <NotesIcon />
          </TaskIconBox>
          <TaskText $w={51}>Записки</TaskText>
        </TaskItem>
        <TaskItem $w={170}>
          <TaskIconBox>
            <OutlookIcon />
          </TaskIconBox>
          <TaskText $w={110}>Inbox - ib@paykeeper</TaskText>
        </TaskItem>
        <TaskItem $w={167}>
          <TaskIconBox>
            <DownloadsIcon />
          </TaskIconBox>
          <TaskText $w={110}>Загрузки — проводник</TaskText>
        </TaskItem>
        <TaskItem $w={168}>
          <TaskIconBox>
            <ChromeIcon />
          </TaskIconBox>
          <TaskText $w={110}>PayKeeper - Google</TaskText>
        </TaskItem>
        <TaskItem $w={168}>
          <TaskIconBox>
            <ExcelIcon />
          </TaskIconBox>
          <TaskText $w={112}>Банки, личные кабинеты</TaskText>
        </TaskItem>
        <TaskItem $w={167}>
          <TaskIconBox>
            <MattermostIcon />
          </TaskIconBox>
          <TaskText $w={110}>Mattermost Desktop</TaskText>
        </TaskItem>
        <TaskItem $w={161} $active>
          <TaskIconBox>
            <OneCTask />
            <TaskBadge>1</TaskBadge>
          </TaskIconBox>
          <TaskText $w={110}>ООО «ПЭЙКИПЕР</TaskText>
        </TaskItem>
        <TaskItem $w={170} $ml={9}>
          <TaskIconBox>
            <YandexIcon />
          </TaskIconBox>
          <TaskText $w={111}>Скриншоты - Яндекс</TaskText>
        </TaskItem>
        <Tray>
          <WeatherDot />
          <WeatherText>
            <div>13°C</div>
            <div>Солнечно</div>
          </WeatherText>
          <FiChevronUp size={17} />
          <TrayLang>РУС</TrayLang>
          <TrayGlyph $ml={21}>
            <MonitorIcon />
          </TrayGlyph>
          <TrayGlyph $ml={8}>
            <FiVolume2 size={18} />
          </TrayGlyph>
          <Clock>
            <div>15:44</div>
            <div>02.04.2025</div>
          </Clock>
        </Tray>
      </Taskbar>
    </Page>
  );
}
